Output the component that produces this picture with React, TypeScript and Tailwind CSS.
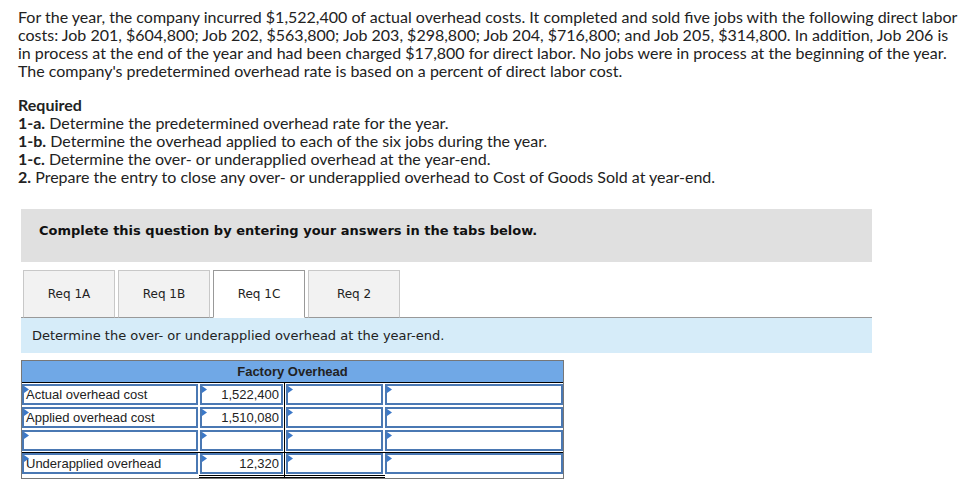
import React from 'react'

const lines = [
  'For the year, the company incurred $1,522,400 of actual overhead costs. It completed and sold five jobs with the following direct labor',
  'costs: Job 201, $604,800; Job 202, $563,800; Job 203, $298,800; Job 204, $716,800; and Job 205, $314,800. In addition, Job 206 is',
  'in process at the end of the year and had been charged $17,800 for direct labor. No jobs were in process at the beginning of the year.',
  "The company's predetermined overhead rate is based on a percent of direct labor cost.",
]

const required = [
  ['1-a.', 'Determine the predetermined overhead rate for the year.'],
  ['1-b.', 'Determine the overhead applied to each of the six jobs during the year.'],
  ['1-c.', 'Determine the over- or underapplied overhead at the year-end.'],
  ['2.', 'Prepare the entry to close any over- or underapplied overhead to Cost of Goods Sold at year-end.'],
]

const tabs = ['Req 1A', 'Req 1B', 'Req 1C', 'Req 2']

const rows = [
  { label: 'Actual overhead cost', amount: '1,522,400' },
  { label: 'Applied overhead cost', amount: '1,510,080' },
  { label: '', amount: '' },
  { label: 'Underapplied overhead', amount: '12,320' },
]

function Marker() {
  return (
    <svg className="absolute left-0 top-0" width="5" height="8" viewBox="0 0 5 8">
      <polygon points="0,0 5,3.5 0,7" fill="#3b78c8" />
    </svg>
  )
}

function Cell({ text, right }: { text: string; right?: boolean }) {
  return (
    <div
      className={`relative h-[21px] border-2 border-[#4a78b3] bg-white px-[2px] text-[13px] leading-[17px] text-[#222] ${
        right ? 'text-right' : 'text-left'
      }`}
    >
      <Marker />
      {text}
    </div>
  )
}

export default function App() {
  return (
    <div className="min-h-[482px] bg-white pl-[18px] pt-[8px] text-[#222]" style={{ fontFamily: 'Lato, "Open Sans", sans-serif' }}>
      <div className="whitespace-nowrap text-[16px] leading-[18px]">
        {lines.map((l) => (
          <div key={l}>{l}</div>
        ))}
      </div>

      <div className="mt-[16px] whitespace-nowrap text-[16px] leading-[18px]">
        <div className="font-bold">Required</div>
        {required.map(([k, v]) => (
          <div key={k}>
            <span className="font-bold">{k}</span> {v}
          </div>
        ))}
      </div>

      <div className="ml-[3px] mt-[23px] w-[851px]" style={{ fontFamily: '"DejaVu Sans", Verdana, sans-serif' }}>
        <div className="h-[53px] bg-[#e0e0e0] pl-[18px] pt-[13px] text-[13px] font-bold leading-[18px] text-[#111]">
          Complete this question by entering your answers in the tabs below.
        </div>

        <div className="mt-[8px] flex gap-[3px] pl-[2px]">
          {tabs.map((t, i) => (
            <div
              key={t}
              className={`-mb-px flex h-[48px] w-[92px] items-center justify-center border text-[12px] text-[#222] ${
                i === 2 ? 'border-[#999] border-b-white bg-white' : 'border-[#c8c8c8] border-b-[#999] bg-[#f2f2f2]'
              }`}
            >
              {t}
            </div>
          ))}
        </div>
        <div className="flex h-[36px] items-center border-t border-[#999] bg-[#d6ecf9] pl-[11px] text-[13px] text-[#222]">
          Determine the over- or underapplied overhead at the year-end.
        </div>

        <div className="mt-[7px] w-[543px] border border-[#777]" style={{ fontFamily: '"Liberation Sans", Arial, sans-serif' }}>
          <div className="h-[22px] border-b border-black bg-[#70a8e6] text-center text-[13px] font-bold leading-[22px] text-[#222]">
            Factory Overhead
          </div>
          {rows.map((r, i) => (
            <div
              key={i}
              className={`grid grid-cols-[177px_86px_100px_178px] ${i === 3 ? 'border-t border-black [&>div]:pt-0' : ''}`}
            >
              <div className="py-px pr-[1px]">
                <Cell text={r.label} />
              </div>
              <div className={`border-r border-black px-px py-px ${i === 3 ? 'border-b-[3px] border-double border-b-black' : ''}`}>
                <Cell text={r.amount} right />
              </div>
              <div className={`py-px pl-px pr-[2px] ${i === 3 ? 'border-b-[3px] border-double border-black' : ''}`}>
                <Cell text="" />
              </div>
              <div className="py-px">
                <Cell text="" />
              </div>
            </div>
          ))}
        </div>
      </div>
    </div>
  )
}
